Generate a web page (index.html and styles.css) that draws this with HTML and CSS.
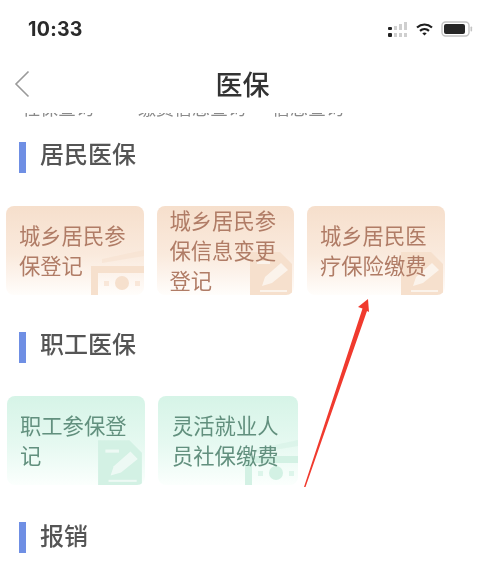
FILE: index.html
```html
<!DOCTYPE html>
<html lang="zh-CN">
<head>
<meta charset="utf-8">
<title>医保</title>
<link rel="stylesheet" href="styles.css">
</head>
<body>
<div class="page">
  <header class="status">
    <span class="time">10:33</span>
    <div class="status-icons">
      <svg class="signal" width="20" height="15" viewBox="0 0 20 15"><g fill="#222"><rect x="0" y="5" width="4" height="3" rx="1"/><rect x="0" y="11" width="4" height="4" rx="1"/></g><g fill="#cfcfcf"><rect x="6" y="4" width="3" height="4"/><rect x="6" y="11" width="3" height="4"/><rect x="11" y="2" width="3" height="6"/><rect x="11" y="11" width="3" height="4"/><rect x="16" y="0" width="3" height="8"/><rect x="16" y="11" width="3" height="4"/></g></svg>
      <svg class="wifi" width="17" height="13" viewBox="0 0 17 13"><path d="M1 4.5C5.5 .5 11.5 .5 16 4.5" fill="none" stroke="#1d1d1d" stroke-width="2.2"/><path d="M4 7.8C6.6 5.6 10.4 5.6 13 7.8" fill="none" stroke="#1d1d1d" stroke-width="2.2"/><path d="M6.3 10.2C7.6 9.2 9.4 9.2 10.7 10.2L8.5 12.6Z" fill="#1d1d1d"/></svg>
      <svg class="battery" width="32" height="16" viewBox="0 0 32 16"><rect x="1" y="1" width="27" height="14" rx="3.5" fill="none" stroke="#c4c4c4" stroke-width="1.4"/><rect x="3" y="3" width="21" height="10" rx="2" fill="#262626"/><rect x="29.5" y="5.5" width="1.6" height="5" rx=".8" fill="#c4c4c4"/></svg>
    </div>
  </header>

  <nav class="nav">
    <svg class="back" width="16" height="28" viewBox="0 0 16 28"><path d="M14.5 1.5L2 14L14.5 26.5" fill="none" stroke="#9a9a9a" stroke-width="1.6"/></svg>
    <h1 class="title">医保</h1>
  </nav>

  <div class="strip">
    <span class="strip-a">社保查询</span>
    <span class="strip-b">缴费信息查询</span>
    <span class="strip-c">信息查询</span>
  </div>

  <section class="section section-first">
    <h2 class="head"><span class="mark"></span><span class="head-text">居民医保</span></h2>
    <div class="cards">
      <a class="card orange">
        <svg class="art art-wallet" viewBox="0 0 54 46"><use href="#wallet"/></svg>
        <span class="card-text">城乡居民参保登记</span>
      </a>
      <a class="card orange">
        <svg class="art art-doc" viewBox="0 0 46 46"><use href="#doc"/></svg>
        <span class="card-text">城乡居民参保信息变更登记</span>
      </a>
      <a class="card orange">
        <svg class="art art-doc" viewBox="0 0 46 46"><use href="#doc"/></svg>
        <span class="card-text">城乡居民医疗保险缴费</span>
      </a>
    </div>
  </section>

  <section class="section">
    <h2 class="head"><span class="mark"></span><span class="head-text">职工医保</span></h2>
    <div class="cards cards-green">
      <a class="card green">
        <svg class="art art-doc" viewBox="0 0 46 46"><use href="#doc"/></svg>
        <span class="card-text">职工参保登记</span>
      </a>
      <a class="card green wide">
        <svg class="art art-wallet" viewBox="0 0 54 46"><use href="#wallet"/></svg>
        <span class="card-text">灵活就业人员社保缴费</span>
      </a>
    </div>
  </section>

  <section class="section">
    <h2 class="head"><span class="mark"></span><span class="head-text head-text-low">报销</span></h2>
  </section>

  <svg class="arrow" width="80" height="200" viewBox="0 0 80 200"><path d="M72 1L62 9L66.500 10.500L8 189L9.500 189L71 13L73 14Z" fill="#f03a2e"/></svg>

  <svg class="defs" width="0" height="0">
    <symbol id="wallet" viewBox="0 0 54 46">
      <path d="M12 10L54 1V7L12 14Z" fill="currentColor" opacity=".55"/>
      <path d="M1 17H54V24H8V46H1Z" fill="currentColor"/>
      <circle cx="32" cy="34" r="7" fill="currentColor"/>
      <rect x="14" y="32" width="5" height="5" fill="currentColor" opacity=".7"/>
      <rect x="45" y="32" width="5" height="5" fill="currentColor" opacity=".7"/>
    </symbol>
    <symbol id="doc" viewBox="0 0 46 46">
      <path d="M2 3H32L44 15V46H2Z" fill="currentColor"/>
      <rect x="9" y="12" width="13" height="3" fill="#fff" opacity=".6"/>
      <path d="M14 37L17 28L33 14L40 21L24 34Z" fill="#fff" opacity=".6"/>
      <rect x="12" y="41" width="27" height="2" fill="#fff" opacity=".6"/>
    </symbol>
  </svg>
</div>
</body>
</html>
```
FILE: styles.css
```css
* {
  box-sizing: border-box;
}

html,
body {
  margin: 0;
  padding: 0;
  background: #fff;
}

.page {
  position: relative;
  width: 481px;
  height: 566px;
  overflow: hidden;
  background: #fff;
  font-family: "Noto Sans CJK SC", "Noto Sans", sans-serif;
  filter: blur(0.55px);
}

.status {
  height: 58px;
  padding: 0 8px 0 28px;
  display: flex;
  align-items: center;
  justify-content: space-between;
}

.time {
  font-family: Inter, "Liberation Sans", sans-serif;
  font-size: 19.5px;
  font-weight: 700;
  color: #2a2a2a;
  letter-spacing: 0.3px;
}

.status-icons {
  display: flex;
  align-items: center;
  gap: 8px;
}

.nav {
  height: 52px;
  padding-left: 14px;
  display: flex;
  align-items: center;
}

.back {
  flex: none;
}

.title {
  margin: 0;
  flex: 1;
  padding-right: 26px;
  text-align: center;
  font-size: 27px;
  line-height: 40px;
  font-weight: 500;
  color: #333;
}

.strip {
  height: 5px;
  margin-top: 3px;
  overflow: hidden;
  display: flex;
  align-items: flex-end;
  font-size: 18px;
  line-height: 24px;
  color: #8a8a8a;
  padding-left: 22px;
}

.strip span {
  flex: none;
  margin-bottom: -1px;
}

.strip-a {
  width: 116px;
}

.strip-b {
  width: 134px;
}

.strip-c {
  width: 90px;
}

.section {
  margin-top: 37px;
}

.section-first {
  margin-top: 24px;
}

.head {
  margin: 0 0 0 19px;
  height: 31px;
  display: flex;
  align-items: center;
  gap: 14px;
  font-size: 24px;
  font-weight: 500;
  color: #555;
}

.head-text {
  margin-bottom: 10px;
  line-height: 31px;
}

.head-text-low {
  margin-bottom: 6px;
}

.mark {
  width: 7px;
  height: 31px;
  background: #6f8fe4;
}

.cards {
  margin-top: 33px;
  padding-left: 6px;
  display: flex;
  gap: 13px;
}

.cards-green {
  padding-left: 7px;
}

.card {
  position: relative;
  width: 138px;
  height: 89px;
  padding: 0 13px 1px;
  border-radius: 8px;
  display: flex;
  align-items: center;
  overflow: hidden;
  font-size: 21.3px;
  line-height: 30px;
}

.card.wide {
  width: 140px;
  padding-left: 14px;
}

.card-text {
  position: relative;
}

.orange {
  width: 137.5px;
  color: #b07c66;
  background: linear-gradient(180deg, #f6dfcc 0%, #faeadd 55%, #fffdfb 100%);
}

.green {
  color: #62907e;
  background: linear-gradient(180deg, #d6f4e7 0%, #e6f9f1 55%, #fbfffd 100%);
}

.orange .art {
  color: #f6e0cd;
}

.green .art {
  color: #d3f1e4;
}

.art {
  position: absolute;
  right: 0;
  bottom: 0;
}

.art-wallet {
  width: 54px;
  height: 46px;
}

.art-doc {
  width: 46px;
  height: 46px;
}

.green .art-doc {
  width: 50px;
  height: 48px;
}

.arrow {
  position: absolute;
  left: 296px;
  top: 298px;
}

.defs {
  position: absolute;
}
```
